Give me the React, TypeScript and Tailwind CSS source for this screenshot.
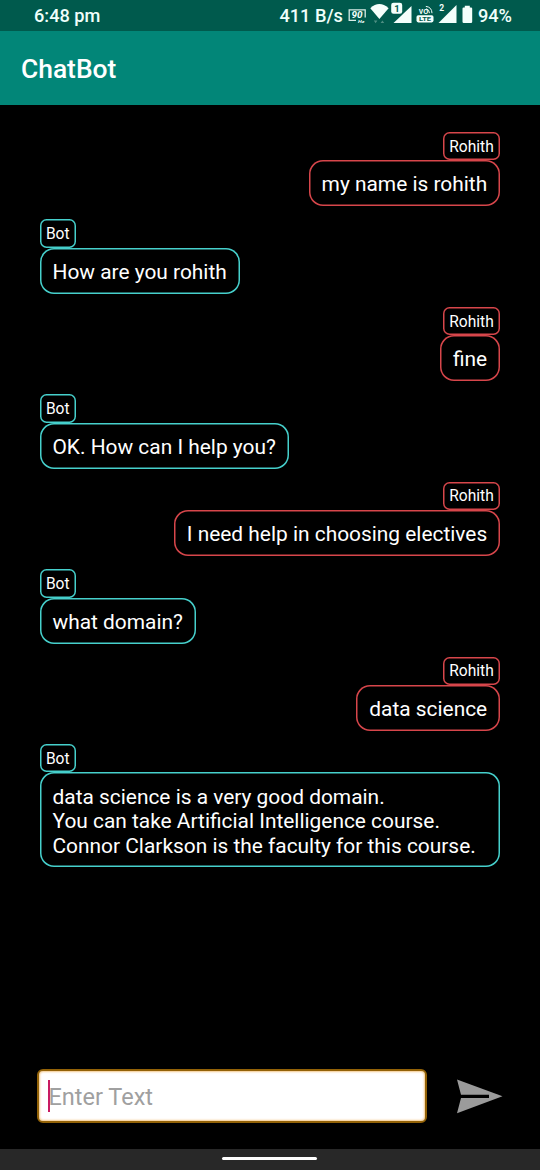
type Message = { from: "Rohith" | "Bot"; lines: string[] };

const messages: Message[] = [
  { from: "Rohith", lines: ["my name is rohith"] },
  { from: "Bot", lines: ["How are you rohith"] },
  { from: "Rohith", lines: ["fine"] },
  { from: "Bot", lines: ["OK. How can I help you?"] },
  { from: "Rohith", lines: ["I need help in choosing electives"] },
  { from: "Bot", lines: ["what domain?"] },
  { from: "Rohith", lines: ["data science"] },
  {
    from: "Bot",
    lines: [
      "data science is a very good domain.",
      "You can take Artificial Intelligence course.",
      "Connor Clarkson is the faculty for this course.",
    ],
  },
];

function StatusIcons() {
  return (
    <svg className="h-[31px] w-[126px]" viewBox="348 0 126 31" fill="#f4fffc">
      <path d="M356 20.4H349.2V9.8H365.2V17.5" fill="none" stroke="#d9ebe6" strokeWidth="1.3" />
      <text x="351.6" y="18" fontSize="8.6" fontWeight="700" fontStyle="italic" textLength="11" lengthAdjust="spacingAndGlyphs">90</text>
      <text x="358" y="23" fontSize="3.4" fontWeight="700" fontStyle="italic" textLength="6.5" lengthAdjust="spacingAndGlyphs">Hz</text>
      <path d="M370.3 8.2Q379.3 -0.2 388.6 8.2L379.4 19Z" />
      <path d="M373.8 20.6h3.6l-1.8 2.6zM380.6 23.1h3.6l-1.8-2.6z" fill="#4f8f83" />
      <path d="M411.5 6V23H393.5Z" />
      <rect x="390.3" y="1.9" width="12.7" height="12.7" rx="3" fill="#005a4d" />
      <rect x="391.2" y="2.7" width="11" height="11" rx="2.3" />
      <text x="394.2" y="11.8" fontSize="9.5" fontWeight="700" fill="#005a4d">1</text>
      <text x="418.8" y="14" fontSize="9.5" fontWeight="500" textLength="9.5" lengthAdjust="spacingAndGlyphs">vo</text>
      <path d="M426 8.8Q429.3 9.3 429.5 13.2M425.8 6.4Q431.8 7 432 13.2" fill="none" stroke="#f4fffc" strokeWidth="1" />
      <rect x="416.5" y="15.2" width="17" height="7.2" rx="1.8" />
      <text x="419" y="21.2" fontSize="6.2" fontWeight="700" fill="#005a4d" textLength="12" lengthAdjust="spacingAndGlyphs">LTE</text>
      <path d="M456.5 5V23H438.5Z" />
      <text x="439.2" y="11" fontSize="8.5" fontWeight="700">2</text>
      <path d="M464.8 5.8h5v1.6h1.2q1.2 0 1.2 1.2V21.8q0 1.2-1.2 1.2h-7.3q-1.2 0-1.2-1.2V8.6q0-1.2 1.2-1.2h1.1z" />
    </svg>
  );
}

function Bubble({ message }: { message: Message }) {
  const own = message.from === "Rohith";
  const outline = own
    ? "shadow-[inset_0_0_0_1.5px_#d7464b]"
    : "shadow-[inset_0_0_0_1.5px_#46d0cc]";
  return (
    <div className={`flex flex-col ${own ? "items-end" : "items-start"}`}>
      <div className={`flex h-[28.5px] items-center rounded-[6.5px] px-[6.4px] pt-[3px] text-[15.6px] leading-none ${outline}`}>
        {message.from}
      </div>
      <div
        className={`rounded-[14px] px-[13px] pt-[12.1px] pb-[9.4px] text-[20.9px] leading-[24.5px] whitespace-nowrap ${outline} ${
          message.lines.length > 1 ? "w-full" : ""
        }`}
      >
        {message.lines.map((line) => (
          <div key={line}>{line}</div>
        ))}
      </div>
    </div>
  );
}

export default function App() {
  return (
    <div className="flex h-[1170px] w-[540px] flex-col overflow-hidden bg-black font-['Roboto',sans-serif] text-white">
      <div className="flex h-[31px] shrink-0 items-center bg-[#005a4d] pr-[28px] pl-[34px] text-[18.2px] font-medium text-[#f0fffb]">
        <span>6:48 pm</span>
        <span className="ml-auto mr-[5px]">411 B/s</span>
        <StatusIcons />
        <span className="ml-[4px]">94%</span>
      </div>
      <header className="flex h-[74px] shrink-0 items-center bg-[#028678] pt-[3px] pl-[21px] text-[26.4px] font-medium">
        <h1>ChatBot</h1>
      </header>
      <main className="flex flex-1 flex-col gap-[13px] pt-[26.6px] pr-[39.8px] pl-[39.5px]">
        {messages.map((message, i) => (
          <Bubble key={i} message={message} />
        ))}
      </main>
      <div className="flex h-[80px] shrink-0 items-start pl-[37px]">
        <div className="flex h-[54px] w-[390px] items-center rounded-[6px] border-[2px] border-[#936207] bg-white pl-[9px] text-[23.5px] text-[#a0a0a0] shadow-[inset_0_0_2px_1px_#f4c98c]">
          <span className="h-[32px] w-[2px] shrink-0 bg-[#c91b60]" />
          <span className="-ml-[1.5px] pt-[3px]">Enter Text</span>
        </div>
        <svg className="mt-[10px] ml-[29px] h-[36px] w-[48px]" viewBox="456 1079 48 36" fill="#9b9b9b">
          <path d="M457 1079.5L502.5 1096.3L457 1113.2L461 1098H489V1094.8H461Z" />
        </svg>
      </div>
      <div className="flex h-[21px] shrink-0 justify-center bg-[#282828] pt-[8px] pr-[2px]">
        <div className="h-[3px] w-[95px] rounded-full bg-white" />
      </div>
    </div>
  );
}
